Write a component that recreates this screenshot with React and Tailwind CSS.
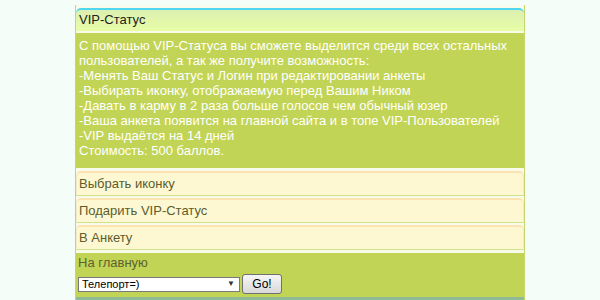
import React from 'react';

const items = ['Выбрать иконку', 'Подарить VIP-Статус', 'В Анкету'];

function App() {
  return (
    <div className="min-h-screen bg-[#f5fdf9] font-['Liberation_Sans',Arial,sans-serif] pt-[5px]">
      <div className="mx-auto w-[450px] border-x border-[#c5d66a] bg-[#f8fbea] pt-[3px]">
        {/* header */}
        <div className="h-[23px] rounded-t-[5px] border-t-2 border-[#4fd6f0] bg-gradient-to-b from-[#dcefb0] to-[#e8fda6] px-[3px] text-[13px] leading-[20px] text-[#222]">
          VIP-Статус
        </div>
        {/* description */}
        <div className="mt-[2px] bg-[#c2d455] px-[3px] pt-[5px] pb-[10px] text-[13px] leading-[15px] text-white">
          <p>С помощью VIP-Статуса вы сможете выделится среди всех остальных пользователей, а так же получите возможность:</p>
          <p>-Менять Ваш Статус и Логин при редактировании анкеты</p>
          <p>-Выбирать иконку, отображаемую перед Вашим Ником</p>
          <p>-Давать в карму в 2 раза больше голосов чем обычный юзер</p>
          <p>-Ваша анкета появится на главной сайта и в топе VIP-Пользователей</p>
          <p>-VIP выдаётся на 14 дней</p>
          <p>Стоимость: 500 баллов.</p>
        </div>
        {/* menu */}
        <div className="flex flex-col gap-[2px] pt-[3px] pb-[3px]">
          {items.map((t) => (
            <div
              key={t}
              className="h-[25px] rounded-t-[5px] border-t-2 border-x border-b border-t-[#fde2b2] border-x-[#f1eac4] border-b-[#cfe28c] bg-[#fef8d2] px-[2px] text-[13px] leading-[21px] text-[#5c5c2c]"
            >
              {t}
            </div>
          ))}
        </div>
        {/* footer */}
        <div className="h-[44px] bg-[#c2d455] px-[2px] pt-[2px]">
          <div className="text-[13px] leading-[16px] text-[#5c6330]">На главную</div>
          <div className="mt-[3px] flex items-center gap-[2px]">
            <div className="flex h-[15px] w-[162px] items-center justify-between border border-[#7a7a7a] bg-white pl-[3px] pr-[4px] text-[11px] leading-[13px] text-black">
              <span>Телепорт=)</span>
              <span className="text-[8px] leading-none text-[#333]">▼</span>
            </div>
            <div className="flex h-[20px] w-[40px] items-center justify-center rounded-[3px] border border-[#707070] bg-gradient-to-b from-[#f6f6f6] to-[#d9d9d9] text-[12px] text-black">
              Go!
            </div>
          </div>
        </div>
        <div className="h-[3px] bg-[#8fba98]" />
      </div>
    </div>
  );
}

export default App;
